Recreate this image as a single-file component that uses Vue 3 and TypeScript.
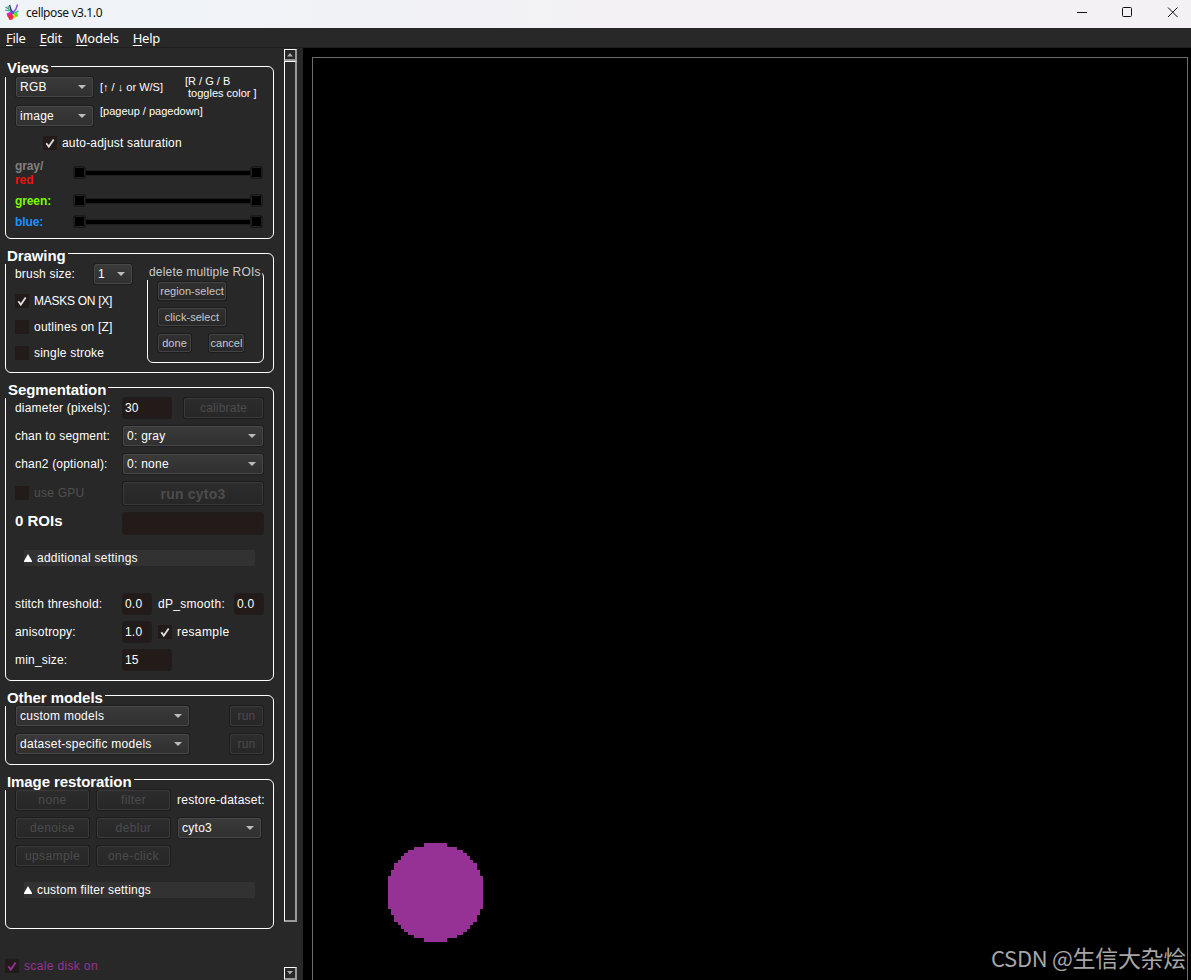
<script setup lang="ts">
interface Channel { name: string; tone: string; prefix?: string }
interface Strip { x: number; y: number; w: number; h: number }

const menus: string[] = ['File', 'Edit', 'Models', 'Help']
const tick = 'M3.300 7.200L5.800 10.600L10.700 3.400'

const channels: Channel[] = [
  { name: 'red', tone: 'red', prefix: 'gray/' },
  { name: 'green:', tone: 'green' },
  { name: 'blue:', tone: 'blue' },
]

const drawingToggles = [
  { label: 'MASKS ON [X]', on: true },
  { label: 'outlines on [Z]', on: false },
  { label: 'single stroke', on: false },
]

// Upper half of the scale disk: [top, left inset, height] per strip, mirrored below.
const half: [number, number, number][] = [
  [0, 36, 4], [4, 26, 3], [7, 20, 3], [10, 16, 3], [13, 13, 4],
  [17, 10, 3], [20, 6, 7], [27, 3, 6],
]
const strips: Strip[] = [
  ...half.map(([y, x, h]) => ({ x, y, w: 95 - 2 * x, h })),
  { x: 0, y: 33, w: 95, h: 33 },
  ...half.map(([y, x, h]) => ({ x, y: 99 - y - h, w: 95 - 2 * x, h })),
]
</script>

<template>
  <div class="window">
    <header class="titlebar">
      <svg class="logo" width="16" height="17" viewBox="0 0 16 17" fill="none">
        <path d="M1.500 3l3.500 2.500 2.500 3M1 6l4 1M4 2l.8 3" stroke="#3fa98a" stroke-width="1.200" />
        <path d="M5.500 1l1 3 1.500 5" stroke="#2b2f66" stroke-width="1.300" />
        <path d="M13.500 .5l-1.500 4.500-3 4" stroke="#8a52d8" stroke-width="1.500" />
        <path d="M14.500 7l-5 2.500" stroke="#35c4a8" stroke-width="1.500" />
        <path d="M2.500 9.500l3.500-1.500 2 2-2 3-2.500-.5z" fill="#e01fc0" />
        <path d="M6 7.500l3-1 1.500 3-2.500 1.500z" fill="#4a4be8" />
        <path d="M9.500 8.500l4 .5.500 3.500-3 .5z" fill="#5fe21c" />
        <path d="M8.500 9.500l2.500 2 .5 2.500-2.500 .5z" fill="#f2d912" />
        <path d="M3.500 12l4-2.500 2 3-1 3-3 .5z" fill="#f02848" />
      </svg>
      <span class="title">cellpose v3.1.0</span>
      <svg class="controls" width="110" height="28" viewBox="0 0 110 28" fill="none" stroke="#111">
        <path d="M5 12.500h10" />
        <rect x="50.500" y="7.500" width="9" height="9" rx="1" />
        <path d="M96 7.500l9.500 9.500M105.500 7.500L96 17" />
      </svg>
    </header>

    <nav class="menubar">
      <span v-for="m in menus" :key="m" class="menu"><u>{{ m[0] }}</u>{{ m.slice(1) }}</span>
    </nav>

    <div class="body">
      <aside class="panel">
        <section class="group views">
          <h2>Views</h2>
          <div class="row modes">
            <div class="combo w77">RGB</div>
            <span class="hint keys">[<i>↑</i> / <i>↓</i> or W/S]</span>
            <span class="hint toggles">[R / G / B<br>&nbsp;toggles color ]</span>
          </div>
          <div class="row images">
            <div class="combo w77">image</div>
            <span class="hint pages">[pageup / pagedown]</span>
          </div>
          <label class="row check auto"><svg class="box"><path :d="tick" /></svg>auto-adjust saturation</label>
          <div v-for="c in channels" :key="c.name" class="row channel" :class="c.tone">
            <span class="chan"><em v-if="c.prefix">{{ c.prefix }}<br></em>{{ c.name }}</span>
            <div class="slider"><i></i><i></i></div>
          </div>
        </section>

        <section class="group drawing">
          <h2>Drawing</h2>
          <div class="tools">
            <div class="row brush"><span>brush size:</span><div class="combo w38">1</div></div>
            <label v-for="t in drawingToggles" :key="t.label" class="row check" :class="{ caps: t.on }">
              <svg class="box"><path v-if="t.on" :d="tick" /></svg>{{ t.label }}
            </label>
          </div>
          <div class="group rois">
            <h3>delete multiple ROIs</h3>
            <button class="btn small wide">region-select</button>
            <button class="btn small wide">click-select</button>
            <div class="pair">
              <button class="btn small done">done</button>
              <button class="btn small cancel">cancel</button>
            </div>
          </div>
        </section>

        <section class="group segmentation">
          <h2>Segmentation</h2>
          <div class="row field"><span class="name">diameter (pixels):</span><div class="input w50">30</div><button class="btn off calibrate">calibrate</button></div>
          <div class="row field"><span class="name">chan to segment:</span><div class="combo grow">0: gray</div></div>
          <div class="row field"><span class="name">chan2 (optional):</span><div class="combo grow">0: none</div></div>
          <div class="row field gpu"><label class="name check off"><svg class="box"></svg>use GPU</label><button class="btn off run-main">run cyto3</button></div>
          <div class="row field"><strong class="name">0 ROIs</strong><div class="input tall"></div></div>
          <div class="fold"><svg width="8" height="8"><path d="M4 0l4.500 8H-.5z" fill="#fff" /></svg>additional settings</div>
          <div class="row field stitch"><span class="name">stitch threshold:</span><div class="input w30">0.0</div><span class="smooth">dP_smooth:</span><div class="input w30">0.0</div></div>
          <div class="row field"><span class="name">anisotropy:</span><div class="input w30">1.0</div><label class="check resample"><svg class="box"><path :d="tick" /></svg>resample</label></div>
          <div class="row field"><span class="name">min_size:</span><div class="input w50">15</div></div>
        </section>

        <section class="group models">
          <h2>Other models</h2>
          <div class="row field spread"><div class="combo w173">custom models</div><button class="btn off run">run</button></div>
          <div class="row field spread"><div class="combo w173">dataset-specific models</div><button class="btn off run">run</button></div>
        </section>

        <section class="group restoration">
          <h2>Image restoration</h2>
          <div class="restore">
            <button class="btn off">none</button><button class="btn off">filter</button><span class="ds">restore-dataset:</span>
            <button class="btn off">denoise</button><button class="btn off">deblur</button><div class="combo">cyto3</div>
            <button class="btn off">upsample</button><button class="btn off">one-click</button>
          </div>
          <div class="fold"><svg width="8" height="8"><path d="M4 0l4.500 8H-.5z" fill="#fff" /></svg>custom filter settings</div>
        </section>

        <label class="check disk-toggle"><svg class="box"><path :d="tick" /></svg>scale disk on</label>
      </aside>

      <div class="scrollbar">
        <div class="arrow"><svg width="6" height="4"><path d="M3 0l3 3.500H0z" fill="#aaa" /></svg></div>
        <div class="thumb"></div>
        <div class="arrow down"><svg width="6" height="4"><path d="M0 0h6L3 3.500z" fill="#aaa" /></svg></div>
      </div>

      <main class="canvas">
        <div class="view">
          <svg class="disk" width="95" height="99" viewBox="0 0 95 99" shape-rendering="crispEdges">
            <rect v-for="s in strips" :key="s.y" :x="s.x" :y="s.y" :width="s.w" :height="s.h" fill="#963296" />
          </svg>
        </div>
        <div class="watermark"><span>CSDN @</span>生信大杂烩</div>
      </main>
    </div>
  </div>
</template>

<style>
html, body { margin: 0; background: #282828; overflow: hidden; }
</style>

<style scoped>
* { box-sizing: border-box; }
.window {
  width: 1191px; height: 980px; overflow: hidden;
  display: flex; flex-direction: column;
  background: #282828; color: #fff;
  font: 12px/14px "Liberation Sans", Arial, sans-serif;
  letter-spacing: .19px; white-space: nowrap;
}
.titlebar {
  height: 28px; flex: none; display: flex; align-items: center;
  background: linear-gradient(90deg, #eff4f9, #f4f1f4 60%, #f3f1f3);
  color: #111; padding-left: 4px;
}
.logo { margin-top: -3px; }
.title { font: 12px/16px "Noto Sans", sans-serif; letter-spacing: -.4px; margin: -2px 0 0 6px; }
.controls { margin-left: auto; margin-right: 9px; }
.menubar {
  height: 20px; flex: none; display: flex; padding-left: 6px; gap: 14px;
  border-bottom: 1px solid #1e1e1e;
  font: 13px/20px "Noto Sans", sans-serif; letter-spacing: -.28px;
}
.menu u { text-underline-offset: 2px; text-decoration-thickness: 1px; }
.body { flex: 1; display: flex; min-height: 0; }
.panel { width: 284px; flex: none; padding: 18px 0 0 5px; }

.group { position: relative; width: 269px; border: 1px solid #fff; border-radius: 6px; margin-bottom: 14px; padding: 9px 9px 0; }
h2, h3 { position: absolute; left: -1px; top: -8px; height: 18px; margin: 0; padding: 0 2px; background: #282828; }
h2 { font-size: 15px; line-height: 19px; letter-spacing: -.08px; }
.row { display: flex; align-items: center; }
.combo {
  position: relative; height: 20px; margin: 1px; padding-left: 3px; line-height: 18px; letter-spacing: .27px;
  border: 1px solid #474747; border-radius: 2px; box-shadow: 0 0 0 1px #1e1e1e;
  background: linear-gradient(#3a3a3a, #303030);
}
.combo::after { content: ""; position: absolute; right: 6px; top: 7px; border: 4px solid transparent; border-top-color: #bbb; border-bottom: 0; }
.w77 { width: 77px; } .w38 { width: 38px; } .w173 { width: 173px; }
.hint { font-size: 11px; line-height: 12px; letter-spacing: 0; }
.hint i { font-style: normal; }
.btn {
  height: 20px; margin: 1px; padding: 0; font: inherit; letter-spacing: inherit; color: #c8c8c8;
  border: 1px solid #434343; border-radius: 2px; box-shadow: 0 0 0 1px #1c1c1c;
  background: linear-gradient(#303030, #282828); text-align: center;
}
.btn.off { color: #4c4c4c; border-color: #3a3a3a; background: linear-gradient(#2c2c2c, #272727); }
.check { display: flex; align-items: center; gap: 5px; letter-spacing: .26px; }
.check.off { color: #505050; }
.box { width: 14px; height: 14px; flex: none; background: #231b19; fill: none; stroke: #ddd; stroke-width: 1.800; }
.input { height: 22px; background: #231b19; border: 1px solid #211d1c; border-radius: 3px; padding-left: 2px; line-height: 20px; }
.w50 { width: 50px; } .w30 { width: 30px; }

.views { height: 173px; }
.views h2 { line-height: 17px; }
.modes { height: 22px; }
.keys { margin-left: 6px; width: 85px; }
.images { height: 22px; margin-top: 7px; }
.pages { margin: -10px 0 0 6px; }
.auto { height: 14px; margin: 9px 0 0 28px; letter-spacing: .2px; }
.channel { height: 14px; margin-top: 7px; font-weight: bold; letter-spacing: -.1px; }
.channel.red { height: 28px; margin-top: 8px; color: #f01010; }
.channel.green { color: #7cfc00; }
.channel.blue { color: #1e90ff; }
.chan { width: 58px; padding-top: 2px; }
.chan em { color: #808080; font-style: normal; }
.slider {
  width: 190px; height: 13px; display: flex; justify-content: space-between;
  background: linear-gradient(#1d1d1d, #1d1d1d) 0 4px / 100% 6px no-repeat;
  position: relative;
}
.slider::before { content: ""; position: absolute; left: 10px; right: 10px; top: 5px; height: 4px; background: #000; }
.slider i { position: relative; width: 13px; height: 13px; background: #000; border: 1px solid #1a1a1a; border-radius: 3px; box-shadow: inset 0 0 0 1px #202020; }

.drawing { height: 120px; display: flex; }
.tools { width: 132px; flex: none; }
.brush { height: 22px; justify-content: space-between; padding-right: 15px; margin-bottom: 9px; }
.brush .combo { margin-right: 0; }
.tools .check { height: 14px; margin-bottom: 12px; letter-spacing: .22px; }
.tools .check.caps { letter-spacing: -.28px; }
.rois { width: 117px; height: 92px; margin: 8px 0 0; padding: 10px 10px 0; }
.rois h3 { top: -9px; left: -1px; height: 17px; width: 115px; font-size: 12px; font-weight: normal; color: #ccc; line-height: 18px; letter-spacing: .18px; }
.btn.small { display: block; height: 18px; font-size: 11px; line-height: 15px; letter-spacing: .05px; margin: 0 0 8px; }
.wide { width: 68px; }
.pair { display: flex; gap: 18px; }
.btn.done { width: 33px; } .btn.cancel { width: 35px; }

.segmentation { height: 294px; }
.segmentation h2 { padding-left: 3px; }
.field { height: 22px; margin-bottom: 6px; }
.name { width: 107px; flex: none; }
.grow { width: 140px; }
.calibrate { width: 79px; margin-left: 12px; }
.gpu { height: 24px; margin-bottom: 5px; }
.btn.run-main { width: 140px; height: 23px; font-size: 14px; font-weight: bold; letter-spacing: .2px; padding-top: 1px; }
strong.name { font-size: 15px; letter-spacing: 0; }
.tall { width: 142px; height: 23px; margin-top: 5px; }
.fold { width: 231px; height: 16px; margin: 18px 0 0 9px; background: #323232; display: flex; align-items: center; gap: 5px; letter-spacing: .25px; }
.stitch { margin-top: 27px; }
.smooth { width: 82px; padding-left: 6px; letter-spacing: .3px; }
.resample { margin-left: 6px; letter-spacing: .4px; }

.models { height: 70px; }
.spread { justify-content: space-between; }
.run { width: 33px; }
.restoration { height: 150px; }
.restore { display: grid; grid-template-columns: 75px 75px 85px; grid-auto-rows: 22px; gap: 6px; align-items: center; }
.restore .btn { letter-spacing: .4px; }
.restore .ds { letter-spacing: .24px; }
.restoration .fold { margin-top: 15px; letter-spacing: .21px; }
.disk-toggle { margin-top: 30px; color: #963296; letter-spacing: .35px; }
.disk-toggle .box { stroke: #963296; }

.scrollbar { width: 19px; flex: none; display: flex; flex-direction: column; padding-top: 1px; }
.arrow, .thumb { width: 13px; border: solid #fff; border-width: 1px 2px 2px 1px; border-right-color: #9a9a9a; border-bottom-color: #9a9a9a; }
.arrow { height: 12px; flex: none; display: flex; align-items: center; justify-content: center; }
.thumb { height: 861px; flex: none; }
.arrow.down { margin-top: 45px; height: 13px; }

.canvas { flex: 1; position: relative; background: #000; padding: 9px 3px 0 9px; overflow: hidden; }
.view { position: relative; height: 940px; border: 1px solid #6c6c6c; }
.disk { position: absolute; left: 75px; top: 785px; }
.watermark { position: absolute; right: 5px; bottom: 7px; font: 23px/32px "Noto Sans CJK SC", sans-serif; letter-spacing: -.3px; color: #a6a6a6; }
.watermark span { font-size: 22px; }
</style>
